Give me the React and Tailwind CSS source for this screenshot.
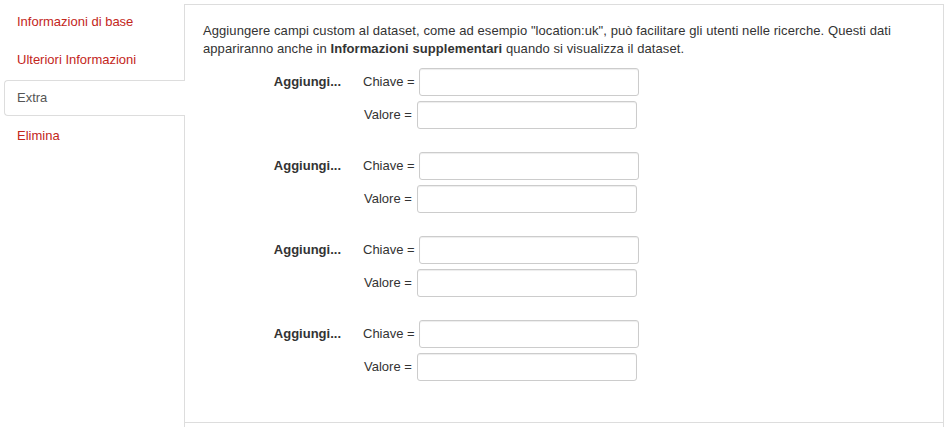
import React from 'react';

const navItems = [
  {label: "Informazioni di base", active: false},
  {label: "Ulteriori Informazioni", active: false},
  {label: "Extra", active: true},
  {label: "Elimina", active: false},
];

function ExtraGroup() {
  return (
    <div className="flex">
      <div className="w-[140px] pr-[2px] h-[28px] flex items-center justify-end font-bold text-[#333]">Aggiungi...</div>
      <div className="ml-[20px] flex flex-col gap-[5px]">
        <div className="flex items-center">
          <label className="mr-[4px]">Chiave =</label>
          <input type="text" className="w-[220px] h-[28px] border border-[#ccc] rounded-[3px] bg-white shadow-[inset_0_1px_1px_rgba(0,0,0,0.075)]" />
        </div>
        <div className="flex items-center">
          <label className="ml-[1px] mr-[5px]">Valore =</label>
          <input type="text" className="w-[220px] h-[28px] border border-[#ccc] rounded-[3px] bg-white shadow-[inset_0_1px_1px_rgba(0,0,0,0.075)]" />
        </div>
      </div>
    </div>
  );
}

export default function App() {
  return (
    <div className="flex h-[427px] w-[947px] bg-white text-[13px] leading-[18px] text-[#333] font-['Liberation_Sans',Arial,sans-serif] overflow-hidden">
      {/* sidebar */}
      <ul className="w-[184px] pl-[4px] pt-[4px] flex flex-col gap-[2px] shrink-0">
        {navItems.map((item) => (
          <li
            key={item.label}
            className={
              item.active
                ? "relative z-10 -mr-px h-[36px] flex items-center px-[12px] bg-white border border-r-0 border-[#ddd] rounded-l-[4px] text-[#555]"
                : "h-[36px] flex items-center px-[13px] text-[#c3261b]"
            }
          >
            {item.label}
          </li>
        ))}
      </ul>

      {/* main panel */}
      <div className="mt-[4px] w-[760px] border-l border-r border-t border-[#ddd] flex flex-col">
        <div className="flex-1 pl-[18px] pt-[17px]">
          <p className="mb-[10px] pr-[20px] tracking-[0.08px]">
            Aggiungere campi custom al dataset, come ad esempio "location:uk", può facilitare gli utenti nelle ricerche. Questi dati appariranno anche in <strong>Informazioni supplementari</strong> quando si visualizza il dataset.
          </p>
          <div className="flex flex-col gap-[23px]">
            <ExtraGroup />
            <ExtraGroup />
            <ExtraGroup />
            <ExtraGroup />
          </div>
        </div>
        <div className="h-[5px] border-t border-[#ddd]"></div>
      </div>
    </div>
  );
}
